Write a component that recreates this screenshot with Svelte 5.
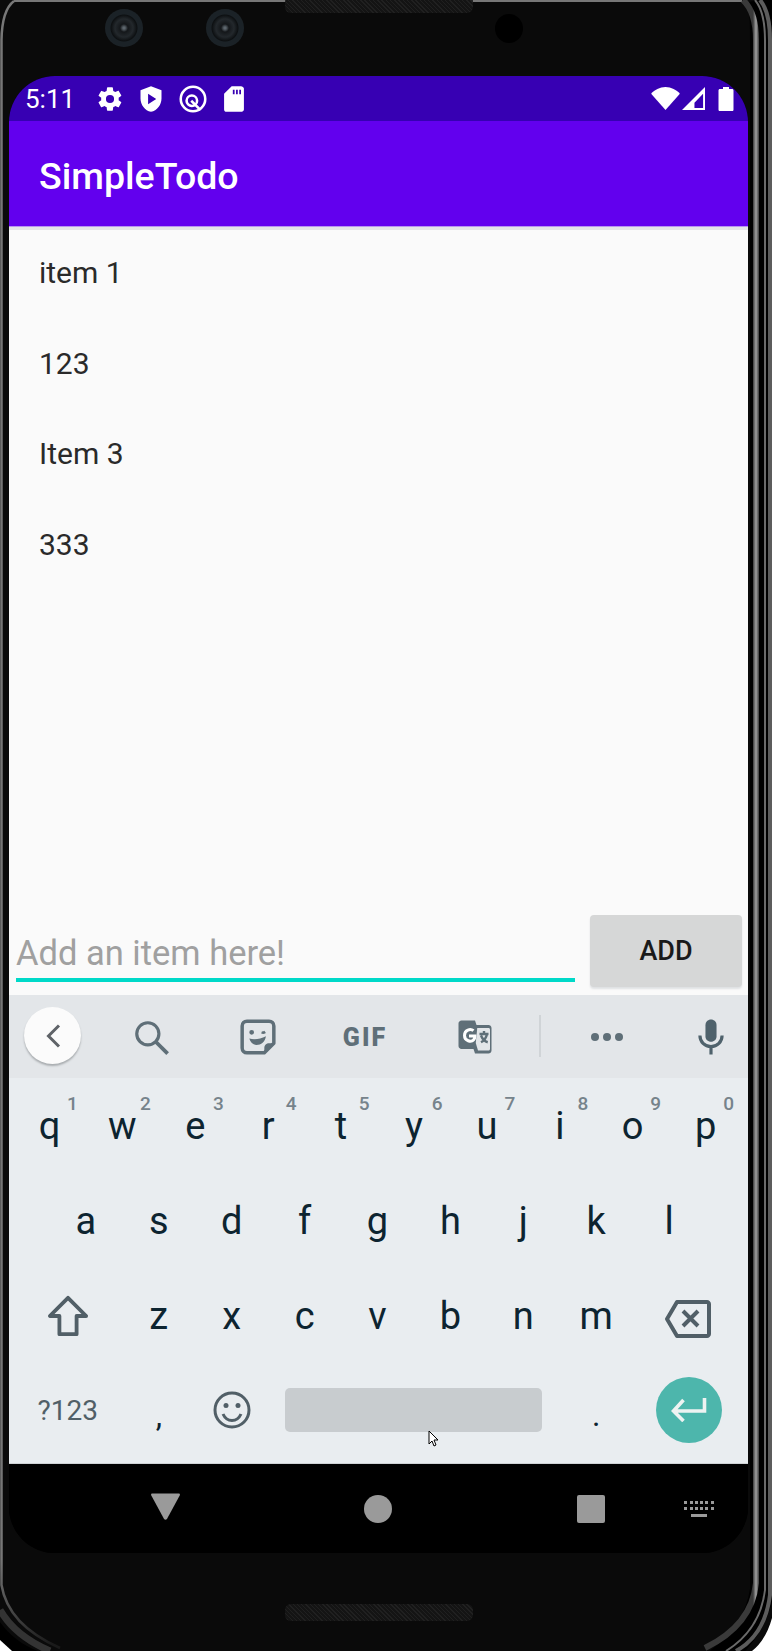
<script>
	const row1 = [['q', 1], ['w', 2], ['e', 3], ['r', 4], ['t', 5], ['y', 6], ['u', 7], ['i', 8], ['o', 9], ['p', 0]];
	const row2 = ['a', 's', 'd', 'f', 'g', 'h', 'j', 'k', 'l'];
	const row3 = ['z', 'x', 'c', 'v', 'b', 'n', 'm'];
	const items = ['item 1', '123', 'Item 3', '333'];
</script>

<div class="device">
	<svg class="frame" viewBox="0 0 772 1651" width="772" height="1651">
		<defs>
			<linearGradient id="rail" gradientUnits="userSpaceOnUse" x1="753" y1="0" x2="759" y2="0">
				<stop offset="0" stop-color="#3a3a3a"/>
				<stop offset="0.5" stop-color="#a0a0a0"/>
				<stop offset="1" stop-color="#3a3a3a"/>
			</linearGradient>
			<linearGradient id="rail-left" gradientUnits="userSpaceOnUse" x1="0" y1="1560" x2="40" y2="1650">
				<stop offset="0" stop-color="#777"/>
				<stop offset="1" stop-color="#1a1a1a"/>
			</linearGradient>
		</defs>
		<g fill="none">
			<path stroke="#000" stroke-width="24" d="M760 0Q762 12 762 40V1590Q756 1632 715 1662"/>
			<path stroke="#777" stroke-width="2" d="M14 1H742"/>
			<path stroke="url(#rail-left)" stroke-width="2.500" d="M14 1Q2 10 1.500 40V1585Q8 1625 60 1648"/>
			<path stroke="url(#rail)" stroke-width="6" d="M743 0Q756 12 756 40V1583Q752 1625 705 1648"/>
			<path stroke="#6a6a6a" stroke-width="2" d="M755 0Q765 12 765 40V1590Q760 1630 726 1651"/>
			<path stroke="#5c5c5c" stroke-width="4" d="M760 0Q770 12 770 40V1595Q765 1635 736 1651"/>
		</g>
		<path fill="#000" d="M0 1622Q14 1642 38 1651H10L0 1640Z"/>
		<path fill="none" stroke="#333" stroke-width="7" d="M0 1610Q15 1636 50 1651"/>
		<path fill="#fff" d="M0 1640V1651H12Z"/>
		<path fill="#fff" d="M772 1618V1651H752Q766 1640 772 1618Z"/>
	</svg>
	<div class="speaker top"></div>
	<div class="speaker bottom"></div>
	<div class="lens one"></div>
	<div class="lens two"></div>
	<div class="sensor"></div>

	<div class="screen">
		<header class="status">
			<span class="time">5:11</span>
			<svg viewBox="0 0 24 24" width="28" height="28"><path fill="#fff" d="M19.400 13c.04-.3.06-.65.06-1s-.02-.7-.07-1l2.100-1.650c.2-.15.24-.42.12-.64l-2-3.460c-.12-.22-.38-.3-.6-.22l-2.500 1c-.52-.4-1.080-.73-1.700-.98L14.440 2.400A.49.49 0 0 0 13.950 2h-4a.49.49 0 0 0-.49.42l-.37 2.650c-.62.25-1.180.58-1.700.98l-2.500-1a.5.5 0 0 0-.6.22l-2 3.460c-.12.22-.07.49.12.64L4.500 11c-.05.3-.08.66-.08 1s.03.7.07 1l-2.100 1.650a.5.5 0 0 0-.12.64l2 3.460c.12.22.38.3.6.22l2.500-1c.52.4 1.080.73 1.700.98l.38 2.650c.04.24.25.42.49.42h4c.24 0 .45-.18.49-.42l.37-2.650c.62-.25 1.180-.58 1.700-.98l2.500 1c.22.08.48 0 .6-.22l2-3.460a.5.5 0 0 0-.12-.64L19.400 13zM12 15.500a3.500 3.500 0 1 1 0-7 3.500 3.500 0 0 1 0 7z"/></svg>
			<svg viewBox="0 0 24 24" width="28" height="28"><path fill="#fff" fill-rule="evenodd" d="M12 1 3 4.500v7c0 5.500 3.800 10.300 9 11.500 5.200-1.200 9-6 9-11.500v-7L12 1zM9.500 7.500v9l7-4.500-7-4.500z"/></svg>
			<svg viewBox="0 0 24 24" width="28" height="28"><g fill="none" stroke="#fff" stroke-width="2.200"><circle cx="12" cy="12" r="10.500"/><circle cx="11" cy="13.500" r="4.500"/><path d="M10.500 13.500l8 8"/></g></svg>
			<svg viewBox="0 0 24 24" width="28" height="28"><path fill="#fff" fill-rule="evenodd" d="M18 1h-8L3.500 7.500V21c0 1.100.9 2 2 2H18c1.100 0 2.500-.9 2.500-2V3c0-1.100-1.400-2-2.500-2zM11 4h1.500v4H11V4zm2.750 0h1.500v4h-1.500V4zM16.500 4H18v4h-1.500V4z"/></svg>
			<span class="grow"></span>
			<div class="radios">
				<svg viewBox="0 0 30 24" width="29" height="23"><path fill="#fff" d="M15 24 0 7c3.500-3.800 9-7 15-7s11.500 3.200 15 7L15 24z"/></svg>
				<svg viewBox="0 0 24 24" width="23" height="23"><path fill="#fff" fill-rule="evenodd" d="M24 0v24H0L24 0zM22 7l-9 9.500V22h9V7z"/></svg>
			</div>
			<svg viewBox="0 0 16 24" width="16" height="24"><path fill="#fff" d="M5 0h6v2h3c1 0 1.500.6 1.500 1.500V22.500c0 1-.5 1.500-1.500 1.500H2c-1 0-1.500-.5-1.500-1.500V3.500C.5 2.600 1 2 2 2h3V0z"/></svg>
		</header>

		<div class="appbar">SimpleTodo</div>

		<main class="content">
			<ul class="list">
				{#each items as item}
					<li>{item}</li>
				{/each}
			</ul>
			<div class="composer">
				<div class="field">Add an item here!</div>
				<button class="add">ADD</button>
			</div>
		</main>

		<div class="toolbar">
			<div class="back">
				<svg viewBox="0 0 24 24" width="24" height="24"><path fill="none" stroke="#5f6368" stroke-width="3" d="M18 1.500 7.500 12 18 22.500"/></svg>
			</div>
			<svg class="tool search" viewBox="0 0 24 24" width="38" height="38"><g fill="none" stroke="#5f6f78" stroke-width="2"><circle cx="10" cy="10" r="7"/><path stroke-width="2.400" d="M15 15l7.500 7.500"/></g></svg>
			<svg class="tool sticker" viewBox="0 0 24 24" width="38" height="38"><g fill="none" stroke="#5f6f78" stroke-width="2.200" stroke-linejoin="round"><path d="M5 2h14c1.700 0 3 1.300 3 3v11l-6 6H5c-1.700 0-3-1.300-3-3V5c0-1.700 1.300-3 3-3z"/></g><path fill="#5f6f78" d="M16 22v-3c0-1.700 1.300-3 3-3h3zM8 10.500a1.500 1.500 0 1 1 0-3 1.500 1.500 0 0 1 0 3zM16 8l1 1.500c-1 .6-2 .7-3 .3l.5-1.400c.5.2 1 0 1.500-.4zM6.500 13c3.500.8 7 .3 10.500-1.500-.5 3.500-3 5.500-6 5.500-2.200 0-3.800-1.500-4.500-4z"/></svg>
			<span class="gif">GIF</span>
			<svg class="tool translate" viewBox="0 0 24 24" width="36" height="36"><path fill="#5f6f78" d="M3 1h9l1 3h8c1 0 2 .8 2 2v15c0 1.200-1 2-2 2h-9l-1-3H3c-1.100 0-2-.9-2-2V3c0-1.100.9-2 2-2z"/><path fill="#e3e6e9" d="M13.500 6H21c.6 0 1 .4 1 1v13c0 .6-.4 1-1 1h-7l-1.500-5z"/><path fill="none" stroke="#5f6f78" stroke-width="1.600" d="M15 10h6M18 8v2M20 10c-.5 2.500-2 4.500-4 5.500M16 11c.8 2 2.500 4 4.500 4.500"/><path fill="none" stroke="#fff" stroke-width="2" d="M11 7.800c-2-1.600-6-.6-6 3.200s4.500 4.500 6 3c.7-.7.9-1.600.9-2.700H8"/></svg>
			<div class="divider"></div>
			<svg class="tool dots" viewBox="0 0 36 12" width="36" height="12"><g fill="#5f6f78"><circle cx="6" cy="6" r="4"/><circle cx="18" cy="6" r="4"/><circle cx="30" cy="6" r="4"/></g></svg>
			<svg class="tool mic" viewBox="0 0 24 24" width="38" height="38"><path fill="#4f626c" d="M12 1c-2 0-3.500 1.500-3.500 3.500v7c0 2 1.500 3.500 3.500 3.500s3.500-1.500 3.500-3.500v-7C15.500 2.500 14 1 12 1z"/><path fill="none" stroke="#4f626c" stroke-width="2" d="M5 11c0 4 3 7 7 7s7-3 7-7M12 18v5"/></svg>
		</div>

		<div class="keyboard">
			<div class="row">
				{#each row1 as [letter, hint]}
					<div class="key">{letter}<sup>{hint}</sup></div>
				{/each}
			</div>
			<div class="row inset">
				{#each row2 as letter}
					<div class="key">{letter}</div>
				{/each}
			</div>
			<div class="row third">
				<div class="key wide">
					<svg viewBox="0 0 44 44" width="42" height="42"><path fill="none" stroke="#515f67" stroke-width="4" stroke-linejoin="round" d="M22 3 3 22h10v19h18V22h10L22 3z"/></svg>
				</div>
				{#each row3 as letter}
					<div class="key">{letter}</div>
				{/each}
				<div class="key wide">
					<svg class="erase" viewBox="0 0 48 40" width="48" height="40"><path fill="none" stroke="#515f67" stroke-width="4" stroke-linejoin="round" d="M13 3h30c1 0 2 1 2 2v30c0 1-1 2-2 2H13L3 20 13 3z"/><path fill="none" stroke="#515f67" stroke-width="4" d="M19 12l15 15M34 12 19 27"/></svg>
				</div>
			</div>
			<div class="row last">
				<div class="key wide sym">?123</div>
				<div class="key mark">,</div>
				<div class="key">
					<svg viewBox="0 0 38 38" width="38" height="38"><g fill="none" stroke="#515f67" stroke-width="3"><circle cx="19" cy="19" r="17"/><path d="M10 23c2 4.500 5 6.500 9 6.500s7-2 9-6.500"/></g><circle cx="13" cy="14.500" r="2.500" fill="#515f67"/><circle cx="25" cy="14.500" r="2.500" fill="#515f67"/></svg>
				</div>
				<div class="space"><div class="bar"></div></div>
				<div class="key mark">.</div>
				<div class="key wide">
					<div class="enter">
						<svg viewBox="0 0 36 24" width="37" height="24"><path fill="none" stroke="#eef3f2" stroke-width="3.600" d="M34 0v13H4M13 2 3 13l10 10"/></svg>
					</div>
				</div>
			</div>
			<svg class="cursor" viewBox="0 0 12 18" width="12" height="18"><path fill="#fff" stroke="#000" stroke-width="1" d="M1 1v13l3-3 2 5 2-1-2-5h4L1 1z"/></svg>
		</div>

		<nav class="nav">
			<svg class="back-nav" viewBox="0 0 32 28" width="31" height="27"><path fill="#9a9a9a" d="M1 2c0-1 .5-1.500 1.500-1.500h27c1 0 1.500.5 1.500 1.500L17.500 27c-.8 1-2.200 1-3 0L1 2z"/></svg>
			<div class="home"></div>
			<div class="recent"></div>
			<svg class="kbd" viewBox="0 0 30 18" width="30" height="18"><g fill="#9a9a9a"><rect x="0" y="0" width="3" height="3"/><rect x="6" y="0" width="3" height="3"/><rect x="11" y="0" width="3" height="3"/><rect x="16" y="0" width="3" height="3"/><rect x="21" y="0" width="3" height="3"/><rect x="27" y="0" width="3" height="3"/><rect x="0" y="6" width="3" height="3"/><rect x="6" y="6" width="3" height="3"/><rect x="11" y="6" width="3" height="3"/><rect x="16" y="6" width="3" height="3"/><rect x="21" y="6" width="3" height="3"/><rect x="27" y="6" width="3" height="3"/><rect x="7" y="13" width="16" height="3"/></g></svg>
		</nav>
	</div>
</div>

<style>
	:global(body) {
		margin: 0;
		background: #fff;
	}

	.device {
		position: relative;
		width: 772px;
		height: 1651px;
		box-sizing: border-box;
		padding: 76px 24px 98px 9px;
		background: #0a0a0a;
		font-family: Roboto, "Liberation Sans", sans-serif;
		overflow: hidden;
	}

	.frame {
		position: absolute;
		left: 0;
		top: 0;
		pointer-events: none;
	}

	.speaker {
		position: absolute;
		left: 285px;
		width: 188px;
		height: 17px;
		border-radius: 6px;
		background: repeating-linear-gradient(45deg, #141414 0 2px, #202020 2px 3px);
	}

	.speaker.top {
		top: -4px;
	}

	.speaker.bottom {
		top: 1604px;
	}

	.lens {
		position: absolute;
		top: 9px;
		width: 38px;
		height: 38px;
		border-radius: 50%;
		background: radial-gradient(circle, #5d666d 0 1px, #14171a 4px, #23282c 9px, #0d1012 13px, #1b2227 14px);
	}

	.lens.one {
		left: 105px;
	}

	.lens.two {
		left: 206px;
	}

	.sensor {
		position: absolute;
		left: 495px;
		top: 14px;
		width: 28px;
		height: 29px;
		border-radius: 50%;
		background: #000;
	}

	.screen {
		display: flex;
		flex-direction: column;
		height: 100%;
		border-radius: 46px;
		overflow: hidden;
		background: #000;
	}

	.status {
		display: flex;
		align-items: center;
		gap: 13.500px;
		height: 45px;
		flex: none;
		box-sizing: border-box;
		padding: 0 14px 0 16px;
		background: #3700b3;
		color: #fff;
	}

	.time {
		font-size: 26px;
		margin-right: 7px;
	}

	.grow {
		flex: 1;
	}

	.radios {
		display: flex;
		align-items: center;
		gap: 2px;
	}

	.appbar {
		flex: none;
		height: 106px;
		box-sizing: border-box;
		display: flex;
		align-items: center;
		padding: 5px 30px 0;
		background: #6200ee;
		color: #fff;
		font-size: 37.500px;
		font-weight: 500;
		border-bottom: 1px solid #b794f0;
	}

	.content {
		flex: 1;
		min-height: 0;
		display: flex;
		flex-direction: column;
		background: #fafafa;
		border-top: 3px solid #e3e5e8;
	}

	.list {
		flex: 1;
		list-style: none;
		margin: 0;
		padding: 0;
	}

	.list li {
		height: 90.500px;
		line-height: 85px;
		padding-left: 30px;
		font-size: 30px;
		color: #2a2a2a;
	}

	.composer {
		display: flex;
		align-items: flex-start;
		gap: 15px;
		padding: 0 6px 8px 7px;
	}

	.field {
		flex: 1;
		height: 67px;
		box-sizing: border-box;
		padding-top: 9px;
		border-bottom: 4px solid #00d9c8;
		font-size: 34.500px;
		line-height: 58px;
		color: #a0a0a0;
	}

	.add {
		width: 152px;
		height: 72px;
		border: 0;
		border-radius: 4px;
		background: #d6d7d7;
		box-shadow: 0 2px 2px #dfe1e3;
		font: 500 27px Roboto, sans-serif;
		color: #1a1a1a;
	}

	.toolbar {
		position: relative;
		flex: none;
		height: 83px;
		background: #e3e6e9;
	}

	.back {
		position: absolute;
		left: 15px;
		top: 12px;
		width: 57px;
		height: 57px;
		display: flex;
		align-items: center;
		justify-content: center;
		border-radius: 50%;
		background: #fbfbfb;
		box-shadow: 0 2px 2px #a9adb0;
	}

	.tool {
		position: absolute;
		top: 50%;
		transform: translate(-50%, -50%);
	}

	.search {
		left: 142px;
	}

	.sticker {
		left: 249px;
	}

	.translate {
		left: 465.500px;
	}

	.dots {
		left: 598px;
	}

	.mic {
		left: 701.500px;
	}

	.gif {
		position: absolute;
		left: 356px;
		top: 50%;
		transform: translate(-50%, -50%);
		font-size: 25px;
		font-weight: 900;
		letter-spacing: 2px;
		color: #5f6f78;
	}

	.divider {
		position: absolute;
		left: 530px;
		top: 20px;
		width: 2px;
		height: 42px;
		background: #d0d4d7;
	}

	.keyboard {
		position: relative;
		flex: none;
		height: 386px;
		box-sizing: border-box;
		padding: 0 6px 0 4px;
		display: grid;
		grid-template-rows: repeat(4, 1fr);
		background: #e9edf0;
		border-bottom: 1px solid #cfd3d6;
	}

	.row {
		display: flex;
	}

	.row.inset {
		padding: 0 36.500px 2px;
	}

	.row.third {
		padding-bottom: 5px;
	}

	.row.last {
		padding-bottom: 9px;
	}

	.key {
		position: relative;
		flex: 1 1 0;
		display: flex;
		align-items: center;
		justify-content: center;
		font-size: 38px;
		color: #0d2430;
	}

	.key.wide {
		flex: 1.500 1 0;
	}

	.erase {
		margin: 5px 0 0 2px;
	}

	.key sup {
		position: absolute;
		top: 14px;
		right: 8px;
		font-size: 19px;
		font-weight: 500;
		color: #76838b;
	}

	.key.sym {
		font-size: 28px;
		color: #515f67;
	}

	.key.mark {
		align-items: flex-end;
		padding-bottom: 24px;
		box-sizing: border-box;
		font-size: 32px;
		line-height: 30px;
	}

	.space {
		flex: 4 1 0;
		display: flex;
		align-items: center;
		justify-content: center;
	}

	.bar {
		width: 257px;
		height: 44px;
		border-radius: 5px;
		background: #c8cccf;
	}

	.enter {
		width: 66px;
		height: 66px;
		margin-left: 3px;
		display: flex;
		align-items: center;
		justify-content: center;
		border-radius: 50%;
		background: #4db6ac;
	}

	.cursor {
		position: absolute;
		left: 419px;
		top: 352px;
	}

	.nav {
		position: relative;
		flex: none;
		height: 89px;
		background: #000;
	}

	.back-nav {
		position: absolute;
		left: 141px;
		top: 29px;
	}

	.home {
		position: absolute;
		left: 355px;
		top: 31px;
		width: 28px;
		height: 28px;
		border-radius: 50%;
		background: #9a9a9a;
	}

	.recent {
		position: absolute;
		left: 568px;
		top: 31px;
		width: 28px;
		height: 28px;
		border-radius: 2px;
		background: #9a9a9a;
	}

	.kbd {
		position: absolute;
		left: 675px;
		top: 37px;
	}
</style>
